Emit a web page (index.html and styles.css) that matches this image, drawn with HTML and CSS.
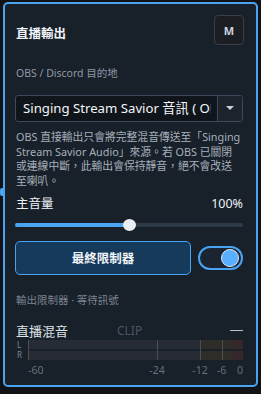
FILE: index.html
```html
<!DOCTYPE html>
<html lang="zh-Hant">
<head>
    <meta charset="UTF-8">
    <meta name="viewport" content="width=device-width, initial-scale=1.0">
    <title>直播輸出</title>
    <link rel="stylesheet" href="styles.css">
</head>
<body>
    <div class="panel">
        <span class="edge-handle"></span>

        <div class="header">
            <h2>直播輸出</h2>
            <button class="mute-btn">M</button>
        </div>

        <div class="field-label">OBS / Discord 目的地</div>
        <div class="select">
            <span class="select-text">Singing Stream Savior 音訊 ( OBS )</span>
            <span class="select-arrow"></span>
        </div>

        <p class="desc">OBS 直接輸出只會將完整混音傳送至「Singing Stream Savior Audio」來源。若 OBS 已關閉<br>或連線中斷，此輸出會保持靜音，絕不會改送<br>至喇叭。</p>

        <div class="volume-row">
            <span>主音量</span>
            <span>100%</span>
        </div>
        <div class="slider">
            <div class="slider-fill" style="width: 50%"></div>
            <div class="slider-thumb" style="left: 50%"></div>
        </div>

        <div class="limiter-row">
            <button class="limiter-btn">最終限制器</button>
            <div class="toggle on"><span class="knob"></span></div>
        </div>

        <div class="status">輸出限制器 · 等待訊號</div>

        <div class="meter-head">
            <span class="meter-title">直播混音</span>
            <span class="clip">CLIP</span>
            <span class="peak"></span>
        </div>
        <div class="meter">
            <div class="channels">
                <span>L</span>
                <span>R</span>
            </div>
            <div class="bars">
                <div class="bar"></div>
                <div class="bar"></div>
                <i class="tick" style="left: 0"></i>
                <i class="tick" style="left: 60%"></i>
                <i class="tick" style="left: 80%"></i>
                <i class="tick" style="left: 90%"></i>
            </div>
        </div>
        <div class="scale">
            <span class="first" style="left: 0">-60</span>
            <span style="left: 60%">-24</span>
            <span style="left: 80%">-12</span>
            <span style="left: 90%">-6</span>
            <span class="last" style="left: 100%">0</span>
        </div>
    </div>
</body>
</html>
```

FILE: styles.css
```css
* {
    box-sizing: border-box;
}
body {
    margin: 0;
    background-color: #121317;
    font-family: "Noto Sans", "Noto Sans CJK TC", sans-serif;
    color: #e6ebf1;
}
.panel {
    position: relative;
    width: 255px;
    height: 385px;
    margin: 2px 0 0 3px;
    padding: 11px 13px 0 10px;
    background: #18202a;
    border: 2px solid #4aa3f0;
    border-radius: 5px;
}
.edge-handle {
    position: absolute;
    left: -5px;
    top: 184px;
    width: 4px;
    height: 8px;
    background: #4aa3f0;
    border-radius: 2px 0 0 2px;
}
.header {
    display: flex;
    justify-content: space-between;
    align-items: center;
    height: 30px;
}
.header h2 {
    margin: 4px 0 0 1px;
    font-size: 12.5px;
    font-weight: bold;
    color: #f1f4f8;
}
.mute-btn {
    width: 30px;
    height: 30px;
    margin-right: -1px;
    padding: 0;
    background: #1b1e23;
    border: 1px solid #3a3f47;
    border-radius: 4px;
    color: #c9d2dc;
    font-family: inherit;
    font-size: 11px;
    font-weight: bold;
}
.field-label {
    margin: 21px 0 0 1px;
    font-size: 10.5px;
    line-height: 14px;
    color: #8e98a3;
}
.select {
    display: flex;
    height: 27px;
    margin-top: 15px;
    background: #10151b;
    border: 1px solid #3b4a5c;
    border-radius: 3px;
    overflow: hidden;
}
.select-text {
    flex: 1;
    margin-right: 6px;
    padding: 0 0 0 7px;
    font-size: 13.2px;
    line-height: 25px;
    white-space: nowrap;
    overflow: hidden;
    color: #f3f5f8;
}
.select-arrow {
    position: relative;
    width: 25px;
    background: #1d232b;
    border-left: 1px solid #3b4a5c;
}
.select-arrow::after {
    content: "";
    position: absolute;
    left: 8px;
    top: 10px;
    border-left: 4px solid transparent;
    border-right: 4px solid transparent;
    border-top: 4px solid #c9d0d8;
}
.desc {
    margin: 8px -8px 0 1px;
    font-size: 10.8px;
    line-height: 14.7px;
    color: #a6b0bb;
}
.volume-row {
    display: flex;
    justify-content: space-between;
    margin: 6px 0 0 1px;
    font-size: 12.5px;
    line-height: 18px;
    color: #eef2f6;
}
.slider {
    position: relative;
    height: 4px;
    margin: 10px 0 0 0;
    background: #2d3a48;
    border-radius: 2px;
}
.slider-fill {
    height: 100%;
    background: #4aa3f0;
    border-radius: 2px;
}
.slider-thumb {
    position: absolute;
    top: -4px;
    width: 13px;
    height: 12px;
    margin-left: -6px;
    background: #e9eef4;
    border-radius: 50%;
}
.limiter-row {
    display: flex;
    align-items: center;
    gap: 7px;
    margin-top: 14px;
}
.limiter-btn {
    flex: 1;
    height: 34px;
    background: #163a5b;
    border: 1px solid #4aa3f0;
    border-radius: 5px;
    color: #f2f5f9;
    font-family: inherit;
    font-size: 12.5px;
    font-weight: bold;
}
.toggle {
    position: relative;
    width: 45px;
    height: 24px;
    background: #1b2531;
    border: 2px solid #4aa3f0;
    border-radius: 12px;
}
.toggle .knob {
    position: absolute;
    right: 2px;
    top: 1px;
    width: 18px;
    height: 18px;
    background: #5aaeff;
    border: 1.5px solid #d7e9fb;
    border-radius: 50%;
}
.status {
    margin: 18px 0 0 1px;
    font-size: 10.5px;
    line-height: 14px;
    color: #7b8591;
}
.meter-head {
    display: flex;
    align-items: center;
    margin: 15px 0 0 1px;
    height: 18px;
}
.meter-title {
    width: 101px;
    font-size: 13px;
    color: #dde2e8;
}
.clip {
    flex: 1;
    font-size: 12px;
    color: #4b5560;
}
.peak {
    width: 13px;
    height: 1px;
    background: #b9c0c8;
}
.meter {
    display: flex;
}
.channels {
    display: flex;
    flex-direction: column;
    width: 13px;
    padding-left: 2px;
    font-size: 8px;
    line-height: 10px;
    color: #7b8591;
}
.bars {
    position: relative;
    flex: 1;
    display: flex;
    flex-direction: column;
    gap: 2px;
}
.bar {
    height: 9px;
    background: linear-gradient(to right, #272b34 80%, #2e2d28 80%, #2e2d28 95%, #35272a 95%);
}
.tick {
    position: absolute;
    top: 0;
    bottom: 0;
    width: 1px;
    background: #4a4f57;
}
.scale {
    position: relative;
    height: 14px;
    margin: 3px 0 0 13px;
    font-size: 10.5px;
    line-height: 14px;
    color: #66707b;
}
.scale span {
    position: absolute;
    transform: translateX(-50%);
}
.scale span.first {
    transform: none;
}
.scale span.last {
    transform: translateX(-100%);
}
```
